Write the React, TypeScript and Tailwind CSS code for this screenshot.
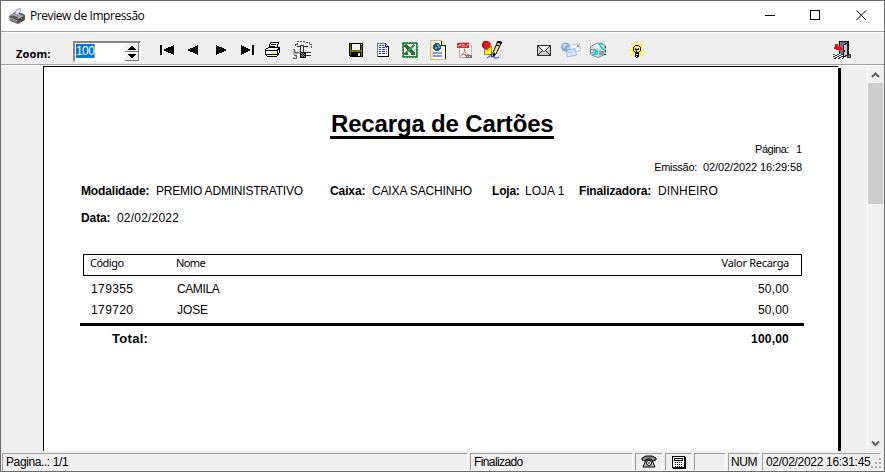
import type { ReactNode } from 'react';

const arial = "font-['Liberation_Sans',Arial,sans-serif]";
const tahoma = "font-['Noto_Sans',Tahoma,sans-serif]";

function Icon({ children, className = '' }: { children: ReactNode; className?: string }) {
  return (
    <svg width="27" height="24" viewBox="0 0 27 24" shapeRendering="crispEdges" className={'shrink-0 ' + className}>
      {children}
    </svg>
  );
}

function Arrow({ d, bar }: { d: string; bar?: number }) {
  return (
    <Icon>
      <g fill="#fff" transform="translate(1 1)">
        <path d={d} />
        {bar !== undefined && <path d={`M${bar} 7h2v10h-2z`} />}
      </g>
      <path d={d} />
      {bar !== undefined && <path d={`M${bar} 7h2v10h-2z`} />}
    </Icon>
  );
}

function Toolbar() {
  return (
    <div className="flex h-[34px] shrink-0 border-y border-[#a0a0a0] bg-[#efefef]">
      <div className="flex w-full border-t border-white pt-[5px]">
        <span className="mt-[9px] ml-[15px] w-[57px] font-['Noto_Sans',Tahoma,sans-serif] text-[11px] leading-[14px] font-bold tracking-[0.1px]">Zoom:</span>
        <div className="mt-[3px] flex h-[21px] w-[68px] border-t-2 border-r border-b border-l-2 border-[#868686] border-r-white border-b-white bg-white">
          <span className={`mt-px ml-px h-[14px] w-[19px] border-r border-[#f08020] bg-[#0078d7] text-[12px] leading-[14px] tracking-[-0.6px] text-white ${arial}`}>100</span>
          <svg width="16" height="18" viewBox="0 0 16 18" shapeRendering="crispEdges" className="ml-auto">
            <path fill="#efefef" d="M0 0h16v18H0z" />
            <path fill="#fff" d="M1 0h14v1H1zM1 0h1v8H1zM1 9h14v1H1zM1 9h1v8H1z" />
            <path fill="#777" d="M1 8h14v1H1zM14 0h1v9h-1zM1 17h14v1H1zM14 9h1v9h-1z" />
            <path d="M7 3h2v1h1v1h1v1h1v1H4V6h1V5h1V4h1zM4 11h8v1h-1v1h-1v1H9v1H7v-1H6v-1H5v-1H4z" />
          </svg>
        </div>
        <div className="ml-[12px] flex">
          <Arrow bar={7} d="M10 12l2-1l2-1l2-1l3-1l2-1v10l-2-1l-3-1l-2-1l-2-1z" />
          <Arrow d="M7 12l2-1l2-1l3-1l2-1l2-1v10l-2-1l-2-1l-3-1l-2-1z" />
          <Arrow d="M20 12l-2-1l-2-1l-3-1l-2-1l-2-1v10l2-1l2-1l3-1l2-1z" />
          <Arrow bar={18} d="M17 12l-2-1l-2-1l-2-1l-2-1l-2-1v10l2-1l2-1l2-1l2-1z" />
          <Icon>
            <path fill="#fff" stroke="#000" d="M9.500 4.500h8l-2 6h-8z" />
            <path stroke="#000" d="M10 6.500h5M9 8.500h5" />
            <path fill="#fff" stroke="#000" d="M4.500 11.500l3-2h11v5l-3 4h-9l-2-2v-4z" />
            <path stroke="#000" fill="none" d="M5 12.500h11v4M16 12.500l3-3" />
            <path stroke="#000" d="M5 16.500h11" />
            <path fill="#f3e600" d="M11 14h4v1h-4z" />
          </Icon>
          <Icon>
            <path fill="#bbb" d="M6 12h2v2h3v-2h2v4H9v3H7v2H5v-2h2v-2H5v-4h1z" />
            <path fill="none" stroke="#666" d="M5 11.500h1v3h5M6 17.500h2v3H5" />
            <path fill="#fff" d="M16 15h7v3h-7z" />
            <path stroke="#333" d="M16 14.500h7M16 17.500h7" />
            <path fill="#eee" d="M9 4h8v1h4v2h2v3h-1V8h-2v1H10V8H7V6h2z" />
            <path fill="none" stroke="#555" strokeDasharray="2 1" d="M7 8V6h2V4.500l1-1h7l1 1h3v2h2v4" />
            <path stroke="#222" d="M9 8.500h3M16 8.500h4" />
            <path fill="#fff" stroke="#333" d="M12.500 7.500h3v7h-3z" />
            <path fill="#111" d="M12 14h6v6h-6z" />
            <path fill="#999" d="M13 15h1v1h-1zM15 15h1v1h-1zM14 16h1v1h-1zM16 16h1v1h-1zM13 17h1v1h-1zM15 17h1v1h-1zM14 18h1v1h-1zM16 18h1v1h-1z" />
          </Icon>
        </div>
        <div className="ml-[27px] flex">
          <Icon>
            <path d="M7 5h14v14H8l-1-1z" />
            <path fill="#777600" d="M8 6h1v11H8zM19 8h1v10h-1zM9 12h10v2H9z" />
            <path fill="#efefef" d="M10 6h8v6h-8zM16 15h2v3h-2zM19 6h1v1h-1z" />
            <path d="M10 14h9v1h-9z" />
          </Icon>
          <Icon>
            <path fill="#fff" stroke="#777" d="M8.500 5.500h8l3 3v10h-11z" />
            <path fill="none" stroke="#000" d="M19.500 8v10.500h-11M16.500 5v3.500h3" />
            <path stroke="#2929df" strokeDasharray="2 1 3 1" d="M10 7.500h5M10 9.500h8M10 11.500h8M10 13.500h8M10 15.500h8" />
          </Icon>
          <Icon>
            <path fill="#fff" stroke="#2d8543" strokeWidth="2" d="M7 5h14v14H7z" />
            <path stroke="#8fc59b" strokeDasharray="1 2" fill="none" d="M6 4.500h16M21.500 4v16M6 19.500h16M6.500 4v16" />
            <path fill="#d9ecdd" d="M15 8h5v10h-5z" />
            <path stroke="#247438" strokeWidth="3" d="M9 7l9 9" />
            <path stroke="#43955a" strokeWidth="2" d="M18 7l-9 9" />
            <path fill="#247438" d="M15 15h4v2h-4zM8 15h4v2H8z" />
          </Icon>
          <Icon>
            <path fill="#fffef0" stroke="#c9bf85" d="M7.500 2.500h11l4 4v15h-15z" />
            <path fill="#f1e7a5" d="M8 3h2v18H8z" />
            <path stroke="#222" fill="none" d="M18.500 3v4h4M22.500 7v14" />
            <circle cx="14" cy="9" r="4" fill="#1c579d" />
            <path fill="#58b66b" d="M14 6h2v2h1v2h-2V8h-1zM12 9h2v2h-2z" />
            <path fill="#8794e6" d="M10 14h9v1h-9zM10 15h9v1h-9zM10 17h9v1h-9zM10 18h9v1h-9z" />
          </Icon>
          <Icon>
            <path fill="#fafafa" stroke="#b5b5b5" d="M9.500 4.500h9l3 3v12h-12z" />
            <path fill="#d52b2b" d="M7 5h12v5H7z" />
            <path stroke="#f3b4b4" fill="none" d="M8.500 9V6.500h2v1h-2M12.500 6v2.500h1.500V6.500h-2M16.500 9V6.500h2" strokeWidth=".8" />
            <path shapeRendering="auto" stroke="#d66" fill="none" d="M14.500 10.500v3l-4 5M14.500 13l2 3l3 1M12 16.500h4" />
            <path fill="#777" d="M15 17h7v3h-7z" />
            <path stroke="#ddd" strokeDasharray="1 1" d="M15 18.500h6" />
          </Icon>
          <Icon>
            <path fill="#ffee21" stroke="#a99a00" d="M7.500 8.500h7v8h-7z" />
            <circle cx="9" cy="7" r="4" fill="#ee1717" />
            <path fill="none" stroke="#8c0000" strokeWidth=".6" d="M6 4l2-1h3l2 2v4l-2 2H8l-2-2z" />
            <path shapeRendering="auto" fill="#f1dfa0" stroke="#000" d="M20.500 4l3.500 1.500l-5 10.500l-2.500 2.500l-.5-4z" />
            <path fill="#000" d="M20 3h4v1h1v2h-2V5h-3zM19 7h3v1h-3zM16 15h2v3h-1z" />
            <path shapeRendering="auto" fill="none" stroke="#2b2be5" d="M10 20l2-1l2-3h1l-1 3l3-1v2h3l2-1" />
          </Icon>
        </div>
        <div className="ml-[26px] flex">
          <Icon>
            <path fill="#ccc" stroke="#333" d="M7.500 7.500h13v10h-13z" />
            <path fill="#fff" d="M9 8h10v2l-4 4h-2L9 10z" />
            <path shapeRendering="auto" fill="none" stroke="#222" d="M8 8l5.500 5.500h1L20 8M8 17l4-4M20 17l-4-4" />
          </Icon>
          <Icon>
            <g shapeRendering="auto">
              <circle cx="8.500" cy="9" r="4.500" fill="#86a9dc" />
              <path fill="#c4d9f3" d="M6 6h4v2H8v2H6zM10 9h3v2h-3z" />
              <path fill="#f4f8ff" stroke="#9cb9e3" strokeWidth=".8" d="M12.500 7.500l10-2l1 7l-10 2.500z" />
              <path fill="#dbe9fc" stroke="#84a5d6" strokeWidth=".8" d="M9 12.500l9-2l1.500 6.500l-9 2z" />
              <path fill="none" stroke="#96b2dc" strokeWidth=".8" d="M9 13l5 2l3.500-4" />
              <path fill="#d67b56" d="M20 7h2v2h-2z" />
            </g>
          </Icon>
          <Icon>
            <g shapeRendering="auto">
              <path fill="#d2dde2" stroke="#777" strokeWidth=".8" d="M6.500 8.500l7-3.500l7.500 2v9.500l-7 3l-7.500-3z" />
              <path fill="#8ca3ae" d="M7 11h5v1H7zM7 14h5v1H7zM15 13h5v4h-5z" />
              <path fill="#fff" d="M8 8.500l5-2.500l5 1.500l-4 2.500z" />
              <path stroke="#12cedd" strokeWidth="1.700" fill="none" d="M19 5l-4 1l2 3l3 3M8 17l3-1l2-3l-4-.5M13 13v4" />
            </g>
            <path fill="#444" d="M21 8h1v2h-1zM21 12h1v2h-1zM20 16h2v1h-2z" />
          </Icon>
        </div>
        <Icon className="ml-[12px]">
          <path fill="#fff426" d="M13 4h2v3h-2zM8 5h2v2h1v2H9V7H8zM20 5h-2v2h-1v2h2V7h1zM6 11h4v2H6zM17 11h4v2h-4zM7 18v-2h2v-1h2v2H9v1zM21 18v-2h-2v-1h-2v2h2v1z" />
          <circle cx="14" cy="11.500" r="5.500" fill="#fff426" />
          <path fill="#fff56a" stroke="#000" d="M12.500 7.500h3l2 2v3l-2 2h-3l-2-2v-3z" />
          <path d="M12 10h1v2h-1zM15 10h1v2h-1zM13 11h2v1h-2zM13 12h1v3h-1zM12 15h4v4h-1v1h-2v-1h-1z" />
          <path fill="#eee" d="M13 16h2v1h-2zM13 18h1v1h-1z" />
        </Icon>
        <Icon className="ml-[179px]">
          <path stroke="#000" fill="#777" d="M10.500 3.500h9v13h-9z" />
          <path fill="#c5c5c5" stroke="#222" d="M14.500 7.500l4-3v12l-4 3z" />
          <path fill="#000" d="M15 12h1v2h-1zM19 4h1v13h-1z" />
          <path fill="#ee1010" d="M6 6h3v2h2v1h1v1h1v2h-1v1h-2v-1H7v-1H5V9h1z" />
          <path stroke="#333" strokeDasharray="2 2" d="M4 16.500h10M6 17.500h8M4 18.500h10M6 19.500h8M5 20.500h9" />
          <path stroke="#fff" strokeDasharray="2 2" d="M6 16.500h8M4 17.500h10M6 18.500h8M4 19.500h10" />
          <path fill="#777" stroke="#333" d="M18.500 17.500h1v-1h2v3h-3z" />
        </Icon>
      </div>
    </div>
  );
}

function Field({ label, value, className = '', labelClass = '', valueClass = '' }: { label: string; value: string; className?: string; labelClass?: string; valueClass?: string }) {
  return (
    <div className={'flex shrink-0 ' + className}>
      <b className={'shrink-0 ' + labelClass}>{label}</b>
      <span className={valueClass}>{value}</span>
    </div>
  );
}

function Report() {
  return (
    <div className={`h-full w-[795px] overflow-hidden border-t border-l border-black bg-white text-[12px] leading-[14px] whitespace-nowrap ${arial}`}>
      <div className="flex pt-[43px] pl-[286px]">
        <h1 className="h-[29px] w-[224px] border-b-[3px] border-black pl-px text-[24px] leading-[28px] font-bold tracking-[-0.16px]">Recarga de Cartões</h1>
      </div>
      <div className="mt-[3px] mr-[36px] text-right text-[11px]">
        <div className="flex justify-end"><span className="mr-[7px] tracking-[-0.5px]">Página:</span><span>1</span></div>
        <div className="mt-[4px] flex justify-end"><span className="mr-[6px] tracking-[-0.3px]">Emissão:</span><span className="tracking-[-0.1px]">02/02/2022 16:29:58</span></div>
      </div>
      <div className="mt-[10px] flex pl-[37px]">
        <Field className="w-[249px]" label="Modalidade:" value="PREMIO ADMINISTRATIVO" labelClass="w-[75px] tracking-[-0.15px]" valueClass="tracking-[-0.2px]" />
        <Field className="w-[162px]" label="Caixa:" value="CAIXA SACHINHO" labelClass="w-[42px] tracking-[-0.1px]" valueClass="tracking-[-0.15px]" />
        <Field className="w-[87px]" label="Loja:" value="LOJA 1" labelClass="w-[33px] tracking-[-0.2px]" />
        <Field label="Finalizadora:" value="DINHEIRO" labelClass="w-[79px] tracking-[-0.15px]" valueClass="tracking-[0.15px]" />
      </div>
      <div className="mt-[13px] pl-[37px]">
        <Field label="Data:" value="02/02/2022" labelClass="w-[36px] tracking-[-0.1px]" valueClass="tracking-[0.2px]" />
      </div>
      <div className={`mt-[29px] ml-[39px] flex h-[22px] w-[719px] border border-black pr-[12px] pl-[6px] text-[11px] leading-[15px] ${tahoma}`}>
        <span className="w-[86px] tracking-[-0.5px]">Código</span>
        <span className="tracking-[-0.6px]">Nome</span>
        <span className="ml-auto tracking-[-0.3px]">Valor Recarga</span>
      </div>
      <div className="mt-[6px] mr-[49px] ml-[47px] flex">
        <span className="w-[86px] tracking-[0.4px]">179355</span><span className="tracking-[-0.4px]">CAMILA</span><span className="ml-auto tracking-[0.2px]">50,00</span>
      </div>
      <div className="mt-[7px] mr-[49px] ml-[47px] flex">
        <span className="w-[86px] tracking-[0.4px]">179720</span><span className="tracking-[-0.1px]">JOSE</span><span className="ml-auto tracking-[0.2px]">50,00</span>
      </div>
      <div className="mt-[6px] ml-[36px] h-[3px] w-[724px] bg-black" />
      <div className="mt-[6px] mr-[49px] ml-[68px] flex justify-between font-bold">
        <span className="text-[13px] tracking-[0.3px]">Total:</span><span className="tracking-[0.2px]">100,00</span>
      </div>
    </div>
  );
}

function Pane({ children, className }: { children?: ReactNode; className: string }) {
  return (
    <div className={`h-[18px] shrink-0 border border-t-[#a0a0a0] border-r-white border-b-white border-l-[#a0a0a0] text-[12px] leading-[16px] ${className}`}>
      {children}
    </div>
  );
}

export default function App() {
  return (
    <div className="flex h-[472px] w-[885px] flex-col overflow-hidden border border-[#6b6b6b] bg-[#efefef] whitespace-nowrap text-black">
      <header className="flex h-[30px] shrink-0 items-center bg-white">
        <svg width="16" height="16" viewBox="0 0 16 16" className="ml-[8px]">
          <path fill="#555" d="M0 8l6-4h4l6 3v5l-7 4l-8-3z" />
          <path fill="#a8a8a8" d="M1 7l6-2l8 3l-6 3z" />
          <path fill="#888" d="M1 9l7 3v3l-7-3z" />
          <path fill="#dce1ff" stroke="#7782c7" strokeWidth=".6" d="M7 2l4-2l1 2l-3 5l-3-1z" />
          <path stroke="#333" d="M4 8l5 2M10 12l4-2" />
          <path fill="#5ac75a" d="M12 10h1v1h-1z" />
        </svg>
        <span className="ml-[5px] font-['Open_Sans','Segoe_UI',sans-serif] text-[12px] leading-[16px] tracking-[-0.43px]">Preview de Impressão</span>
        <svg width="130" height="30" viewBox="0 0 130 30" className="ml-auto" fill="none" stroke="#000" shapeRendering="crispEdges">
          <path d="M11 14.500h10M56.500 9.500h9v9h-9z" />
          <path shapeRendering="auto" d="M102.500 9.500l9.500 9.500M112 9.500l-9.500 9.500" />
        </svg>
      </header>
      <Toolbar />
      <main className="flex h-[386px] shrink-0 border-t border-white pl-[42px]">
        <Report />
        <div className="mt-[2px] w-[3px] bg-black" />
        <div className="ml-auto flex w-[17px] flex-col border-l border-white bg-[#f0f0f0]">
          <svg width="16" height="17" viewBox="0 0 16 17" fill="none" stroke="#606060" strokeWidth="2"><path d="M4 11l3.500-3.500l3.500 3.500" /></svg>
          <div className="h-[121px] w-[15px] bg-[#cdcdcd]" />
          <svg width="16" height="17" viewBox="0 0 16 17" className="mt-auto" fill="none" stroke="#606060" strokeWidth="2"><path d="M4 7.500l3.500 3.500l3.500-3.500" /></svg>
        </div>
      </main>
      <footer className={`flex h-[20px] shrink-0 gap-[2px] pt-[2px] pl-px ${arial}`}>
        <Pane className="w-[466px] pl-[3px]"><span className="tracking-[-0.4px]">Pagina..: 1/1</span></Pane>
        <Pane className="w-[163px] pl-[3px]"><span className="tracking-[-0.6px]">Finalizado</span></Pane>
        <Pane className="flex w-[28px] justify-center">
          <svg width="18" height="16" viewBox="0 0 18 16">
            <path fill="#888" stroke="#000" d="M2 6V4l4-2h6l4 2v2l-3 1l-2-2H7L5 7z" />
            <path fill="#bbb" stroke="#000" d="M6 6h6l3 7H3z" />
            <circle cx="9" cy="9" r="2.500" fill="#fff" stroke="#000" />
            <path stroke="#000" d="M8 9h2" />
          </svg>
        </Pane>
        <Pane className="flex w-[27px] justify-center">
          <svg width="16" height="16" viewBox="0 0 16 16" shapeRendering="crispEdges">
            <path fill="#fff" stroke="#000" d="M1.500 2.500h12v11h-12z" />
            <path stroke="#000" fill="none" d="M3.500 4.500h8v2h-8zM14.500 3v11.500H2" />
            <path stroke="#000" strokeDasharray="1 1" d="M4 8.500h8M4 10.500h8M4 12.500h8" />
          </svg>
        </Pane>
        <Pane className="w-[32px]" />
        <Pane className="w-[32px] pl-[2px]"><span className="tracking-[-0.4px]">NUM</span></Pane>
        <Pane className="flex w-[119px] pl-[3px]">
          <span className="tracking-[-0.3px]">02/02/2022 16:31:45</span>
          <svg width="10" height="12" viewBox="0 0 10 12" shapeRendering="crispEdges" fill="#aaa" className="mt-[4px] -mr-px ml-auto shrink-0">
            <path d="M8 0h2v2H8zM4 4h2v2H4zM8 4h2v2H8zM0 8h2v2H0zM4 8h2v2H4zM8 8h2v2H8z" />
          </svg>
        </Pane>
      </footer>
    </div>
  );
}
